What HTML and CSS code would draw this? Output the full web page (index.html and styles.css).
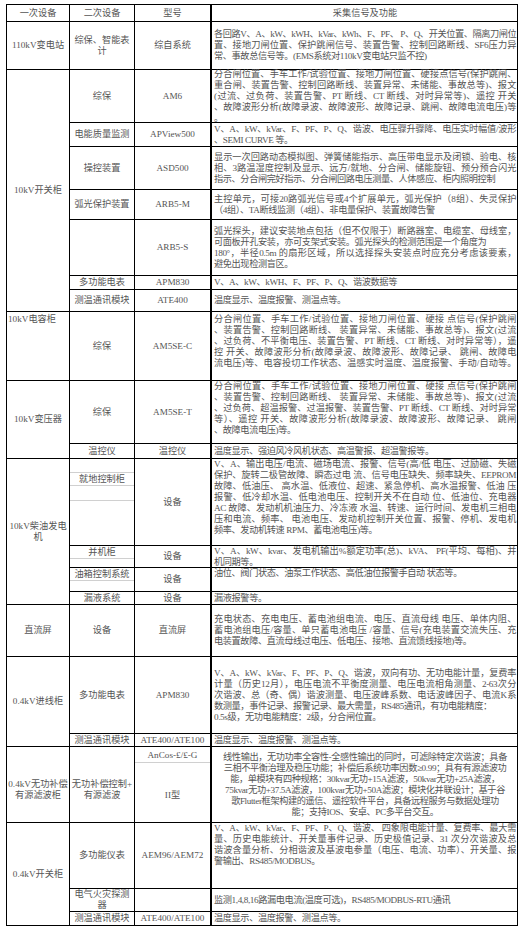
FILE: index.html
```html
<!DOCTYPE html>
<html lang="zh-CN">
<head>
<meta charset="utf-8">
<title>一次设备与二次设备采集信号表</title>
<link rel="stylesheet" href="styles.css">
</head>
<body>
<div class="spec">
  <!-- header -->
  <div class="cell">一次设备</div>
  <div class="cell">二次设备</div>
  <div class="cell">型号</div>
  <div class="cell desc center">采集信号及功能</div>

  <!-- 110kV -->
  <div class="cell">110kV变电站</div>
  <div class="cell"><span class="lbl">综保、智能表<br>计</span></div>
  <div class="cell">综自系统</div>
  <div class="cell desc">
    <span class="j t">各回路V、A、kW、kWH、kVar、kWh、F、PF、 P、Q、开关位置、隔离刀闸位</span>
    <span class="j">置、接地刀闸位置、保护跳闸信号、装置告警、控制回路断线、SF6压力异</span>
    <span class="l">常、事故总信号等。(EMS系统对110kV变电站只监不控)</span>
  </div>

  <!-- 10kV 开关柜 -->
  <div class="cell span7">10kV开关柜</div>
  <div class="cell">综保</div>
  <div class="cell">AM6</div>
  <div class="cell desc">
    <span class="j">分合闸位置、手车工作/试验位置、接地刀闸位置、硬接点信号(保护跳闸、</span>
    <span class="j">重合闸、装置告警、控制回路断线、装置异常、未储能、事故总等)、报文</span>
    <span class="j">(过流、过负荷、装置告警、PT 断线、CT 断线、对时异常等)、遥控 开关</span>
    <span class="j">、故障波形分析(故障录波、故障波形、故障记录、跳闸、故障电流电压)等</span>
    <span class="l">。</span>
  </div>

  <div class="cell">电能质量监测</div>
  <div class="cell">APView500</div>
  <div class="cell desc">
    <span class="j">V、A、kW、kVar、F、PF、P、Q、谐波、电压骤升骤降、电压实时幅值/波形</span>
    <span class="l">、SEMI CURVE 等。</span>
  </div>

  <div class="cell">操控装置</div>
  <div class="cell">ASD500</div>
  <div class="cell desc">
    <span class="j">显示一次回路动态模拟图、弹簧储能指示、高压带电显示及闭锁、验电、核</span>
    <span class="j">相、3路温湿度控制及显示、远方/就地、分合闸、储能旋钮、预分预合闪光</span>
    <span class="l">指示、分合闸完好指示、分合闸回路电压测量、人体感应、柜内照明控制</span>
  </div>

  <div class="cell">弧光保护装置</div>
  <div class="cell">ARB5-M</div>
  <div class="cell desc">
    <span class="j">主控单元，可接20路弧光信号或4个扩展单元，弧光保护（8组）、失灵保护</span>
    <span class="l">（4组）、TA断线监测（4组）、非电量保护、装置故障告警</span>
  </div>

  <div class="cell"></div>
  <div class="cell">ARB5-S</div>
  <div class="cell desc">
    <span class="j">弧光探头，建议安装地点包括（但不仅限于）断路器室、电缆室、母线室，</span>
    <span class="l">可面板开孔安装，亦可支架式安装。弧光探头的检测范围是一个角度为</span>
    <span class="j">180°，半径0.5m 的扇形区域，所以选择探头安装点时应充分考虑该要素，</span>
    <span class="l">避免出现检测盲区。</span>
  </div>

  <div class="cell">多功能电表</div>
  <div class="cell">APM830</div>
  <div class="cell desc"><span class="l">V、A、kW、kWH、F、PF、P、Q、谐波数据等</span></div>

  <div class="cell">测温通讯模块</div>
  <div class="cell">ATE400</div>
  <div class="cell desc"><span class="l">温度显示、温度报警、测温点等。</span></div>

  <!-- 10kV 电容柜 -->
  <div class="cell topleft">10kV电容柜</div>
  <div class="cell">综保</div>
  <div class="cell">AM5SE-C</div>
  <div class="cell desc top pad2">
    <span class="j">分合闸位置、手车工作/试验位置、接地刀闸位置、硬接 点信号(保护跳闸</span>
    <span class="j">、装置告警、控制回路断线、 装置异常、未储能、事故总等)、报文(过流</span>
    <span class="j">、过负荷、不平衡电压、装置告警、PT 断线、CT 断线、对时异常等），遥</span>
    <span class="j">控 开关、故障波形分析(故障录波、故障波形、故障记录、 跳闸、故障电</span>
    <span class="j">流电压)等、电容投切工作状态、温感实时温度、温度报警、手动/自动等。</span>
  </div>

  <!-- 10kV 变压器 -->
  <div class="cell span2">10kV变压器</div>
  <div class="cell">综保</div>
  <div class="cell">AM5SE-T</div>
  <div class="cell desc top">
    <span class="j">分合闸位置、手车工作/试验位置、接地刀闸位置、硬接 点信号(保护跳闸</span>
    <span class="j">、装置告警、控制回路断线、 装置异常、未储能、事故总等)、报文(过流</span>
    <span class="j">、过负荷、超温报警、过温报警、装置告警、PT 断线、CT 断线、对时异常</span>
    <span class="j">等）、遥控 开关、故障波形分析(故障录波、故障波形、故障记录、 跳闸</span>
    <span class="l">、故障电流电压)等。</span>
  </div>

  <div class="cell">温控仪</div>
  <div class="cell">温控仪</div>
  <div class="cell desc"><span class="l">温度显示、强迫风冷风机状态、高温警报、超温警报等。</span></div>

  <!-- 10kV 柴油发电机 -->
  <div class="cell span4"><span class="lbl">10kV柴油发电<br>机</span></div>
  <div class="cell stack">
    <div class="sub gap-a"></div>
    <div class="sub">就地控制柜</div>
    <div class="sub gap-b"></div>
  </div>
  <div class="cell">设备</div>
  <div class="cell desc top">
    <span class="j">V、A、输出电压/电流、磁场电流、报警、信号(高/低 电压、过励磁、失磁</span>
    <span class="j">保护、旋转二极管故障、瞬态过电 流、信号电压缺失、频率缺失、EEPROM</span>
    <span class="j">故障、低油压、 高水温、低液位、超速、紧急停机、高水温报警、低油 压</span>
    <span class="j">报警、低冷却水温、低电池电压、控制开关不在自动 位、低油位、充电器</span>
    <span class="j">AC 故障、发动机机油压力、冷冻液 水温、转速、运行时间、发电机三相电</span>
    <span class="j">压和电流、频率、 电池电压、发动机控制开关位置、报警、停机、发电机</span>
    <span class="l">频率、发动机转速 RPM、蓄电池电压)等。</span>
  </div>

  <div class="cell stack"><div class="sub">并机柜</div></div>
  <div class="cell">设备</div>
  <div class="cell desc">
    <span class="j">V、A、kW、kvar、发电机输出%额定功率(总)、kVA、 PF(平均、每相)、并</span>
    <span class="l">机同期等。</span>
  </div>

  <div class="cell stack"><div class="sub">油箱控制系统</div></div>
  <div class="cell">设备</div>
  <div class="cell desc top"><span class="l">油位、阀门状态、油泵工作状态、高低油位报警手自动 状态等。</span></div>

  <div class="cell">漏液系统</div>
  <div class="cell">设备</div>
  <div class="cell desc"><span class="l">漏液报警等。</span></div>

  <!-- 直流屏 -->
  <div class="cell">直流屏</div>
  <div class="cell">设备</div>
  <div class="cell">直流屏</div>
  <div class="cell desc">
    <span class="j">充电状态、充电电压、蓄电池组电流、电压、直流母线 电压、单体内阻、</span>
    <span class="j">蓄电池组电压/容量、单只蓄电池电压 /容量、信号(充电装置交流失压、充</span>
    <span class="l">电装置故障、直流母线过电压、低电压、接地、直流馈线接地)等。</span>
  </div>

  <!-- 0.4kV 进线柜 -->
  <div class="cell span2">0.4kV进线柜</div>
  <div class="cell">多功能电表</div>
  <div class="cell">APM830</div>
  <div class="cell desc">
    <span class="j">V、A、kW、kVar、F、PF、P、Q、谐波，双向有功、无功电能计量，复费率</span>
    <span class="j">计量（历史12月），电压电流不平衡度测量、电压电流相角测量、2-63次分</span>
    <span class="j">次谐波、总（奇、偶）谐波测量、电压波峰系数、电话波峰因子、电流K系</span>
    <span class="l">数测量，事件记录、报警记录、最大需量，RS485通讯，有功电能精度：</span>
    <span class="l">0.5s级，无功电能精度：2级，分合闸位置。</span>
  </div>

  <div class="cell">测温通讯模块</div>
  <div class="cell">ATE400/ATE100</div>
  <div class="cell desc"><span class="l">温度显示、温度报警、测温点等。</span></div>

  <!-- 0.4kV 无功补偿 -->
  <div class="cell low"><span class="lbl">0.4kV无功补偿<br>有源滤波柜</span></div>
  <div class="cell low"><span class="lbl">无功补偿控制+<br>有源滤波</span></div>
  <div class="cell stack">
    <div class="sub model">AnCos-£/£-G</div>
    <div class="rest">II型</div>
  </div>
  <div class="cell desc center">
    <span class="c">线性输出，无功功率全容性-全感性输出的同时，可滤除特定次谐波；具备</span>
    <span class="c">三相不平衡治理及稳压功能；补偿后系统功率因数≥0.99；具有有源滤波功</span>
    <span class="c">能，单模块有四种规格：30kvar无功+15A滤波，50kvar无功+25A滤波，</span>
    <span class="c">75kvar无功+37.5A滤波，100kvar无功+50A滤波；模块化并联设计；基于谷</span>
    <span class="c">歌Flutter框架构建的遥信、遥控软件平台，具备远程服务与数据处理功</span>
    <span class="c">能；支持IOS、安卓、PC多平台交互。</span>
  </div>

  <!-- 0.4kV 开关柜 -->
  <div class="cell span3">0.4kV开关柜</div>
  <div class="cell">多功能仪表</div>
  <div class="cell">AEM96/AEM72</div>
  <div class="cell desc top">
    <span class="j">V、A、kW、kVar、F、PF、P、Q、谐波、 四象限电能计量、复费率、最大需</span>
    <span class="j">量、历史电能统计、开关量事件记录、历史极值记录、31 次分次谐波及总</span>
    <span class="j">谐波含量分析、分相谐波及基波电参量（电压、电流、功率）、开关量、报</span>
    <span class="l">警输出、RS485/MODBUS。</span>
  </div>

  <div class="cell"><span class="lbl">电气火灾探测<br>器</span></div>
  <div class="cell"></div>
  <div class="cell desc"><span class="l">监测1,4,8,16路漏电电流(温度可选)，RS485/MODBUS-RTU通讯</span></div>

  <div class="cell">测温通讯模块</div>
  <div class="cell">ATE400/ATE100</div>
  <div class="cell desc"><span class="l">温度显示、温度报警、测温点等。</span></div>
</div>
</body>
</html>
```

FILE: styles.css
```css
html, body {
  margin: 0;
  background: #ffffff;
}

body {
  padding: 4px 0 0 6px;
  font-family: "Liberation Serif", "Noto Sans CJK SC", serif;
  font-size: 9.2px;
  line-height: 11px;
  color: #555555;
}

.spec {
  display: grid;
  width: max-content;
  grid-template-columns: 63px 65px 76px 307px;
  grid-template-rows:
    17px 48px
    53px 24px 43px 30px 56px 14px 22px
    69px
    63px 15px
    87px 22px 24px 13px
    52px
    77px 13px
    76px
    66px 23px 14px;
  border-top: 1px solid #000;
  border-left: 1px solid #000;
}

.cell {
  box-sizing: border-box;
  min-width: 0;
  min-height: 0;
  border-right: 1px solid #000;
  border-bottom: 1px solid #000;
  padding: 0 1px;
  display: flex;
  flex-direction: column;
  justify-content: center;
  text-align: center;
}

.span2 { grid-row: span 2; }
.span3 { grid-row: span 3; }
.span4 { grid-row: span 4; }
.span7 { grid-row: span 7; }

.lbl {
  display: block;
}

.low {
  padding-top: 10px;
}

.desc {
  border-left: 1px solid #000;
  text-align: left;
  padding: 0 1px 0 2px;
  letter-spacing: -0.4px;
}

.desc.center {
  text-align: center;
  letter-spacing: 0;
}

.desc.top {
  justify-content: flex-start;
}

.desc.pad2 {
  padding-top: 2px;
}

.desc .j,
.desc .l,
.desc .c {
  display: block;
  white-space: nowrap;
}

.desc .j {
  text-align: justify;
  text-align-last: justify;
}

.desc .l {
  text-align: left;
}

.desc .c {
  text-align: center;
  letter-spacing: -0.4px;
}

.desc .t {
  letter-spacing: -0.6px;
}

.topleft {
  justify-content: flex-start;
  text-align: left;
  padding-top: 2px;
}

.stack {
  justify-content: flex-start;
  padding: 0;
}

.sub {
  border-bottom: 1px solid #d0d0d0;
  min-height: 11px;
  padding-top: 1px;
}

.sub.model {
  padding: 3px 0 1px;
}

.gap-a { height: 12px; }
.gap-b { height: 13px; }

.rest {
  flex: 1;
  display: flex;
  align-items: center;
  justify-content: center;
  padding-top: 6px;
}
```
